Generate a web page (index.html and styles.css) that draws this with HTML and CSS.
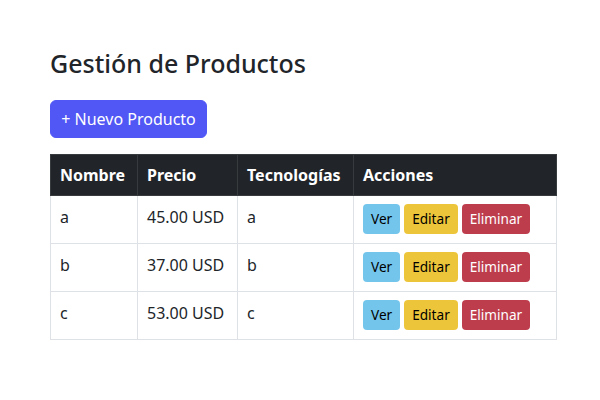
FILE: index.html
```html
<!DOCTYPE html>
<html lang="es">
<head>
<meta charset="utf-8">
<link rel="stylesheet" href="styles.css">
</head>
<body>
<div class="container">
  <h2 class="title">Gestión de Productos</h2>
  <button class="btn btn-primary">+ Nuevo Producto</button>
  <table class="table">
    <thead>
      <tr><th class="c1">Nombre</th><th class="c2">Precio</th><th class="c3">Tecnologías</th><th>Acciones</th></tr>
    </thead>
    <tbody>
      <tr><td>a</td><td>45.00 USD</td><td>a</td><td><span class="btn-sm info">Ver</span><span class="btn-sm warn">Editar</span><span class="btn-sm danger">Eliminar</span></td></tr>
      <tr><td>b</td><td>37.00 USD</td><td>b</td><td><span class="btn-sm info">Ver</span><span class="btn-sm warn">Editar</span><span class="btn-sm danger">Eliminar</span></td></tr>
      <tr><td>c</td><td>53.00 USD</td><td>c</td><td><span class="btn-sm info">Ver</span><span class="btn-sm warn">Editar</span><span class="btn-sm danger">Eliminar</span></td></tr>
    </tbody>
  </table>
</div>
</body>
</html>
```
FILE: styles.css
```css
html, body { margin: 0; padding: 0; background: #fff; }
body {
  font-family: "Noto Sans", "Open Sans", sans-serif;
  color: #212529;
  font-size: 16px;
  line-height: 1.5;
}
.container { padding: 48px 43px 0 50px; }
.title {
  margin: 0 0 22px 0;
  font-size: 25px;
  font-weight: 500;
  line-height: 1.2;
}
.btn {
  font-family: inherit;
  font-size: 16px;
  line-height: 24px;
  border: 1px solid transparent;
  border-radius: 6px;
  padding: 6px 12px;
  cursor: pointer;
}
.btn-primary { background: #5057f5; color: #fff; border-color: #5057f5; width: 157px; height: 38px; padding: 0; }
.table {
  margin-top: 16px;
  width: 507px;
  border-collapse: collapse;
}
.table th, .table td {
  border: 1px solid #dee2e6;
  padding: 8px 9px;
  text-align: left;
  vertical-align: top;
}
.table th {
  background: #212529;
  color: #fff;
  font-weight: 700;
  border-color: #373b3e;
  height: 24px;
}
.table td { height: 31px; line-height: 24px; }
.table td:first-child, .table td:nth-child(2), .table td:nth-child(3) { padding-top: 9px; padding-bottom: 7px; }
.c1 { width: 68px; }
.c2 { width: 81px; }
.c3 { width: 97px; }
.btn-sm {
  display: inline-block;
  font-size: 13.6px;
  line-height: 21px;
  padding: 4px 8px 5px;
  border-radius: 4px;
  margin-right: 4px;
  vertical-align: top;
}
.info { background: #73c5ec; color: #000; }
.warn { background: #edc53a; color: #000; }
.danger { background: #bd3d4d; color: #fff; }
```
